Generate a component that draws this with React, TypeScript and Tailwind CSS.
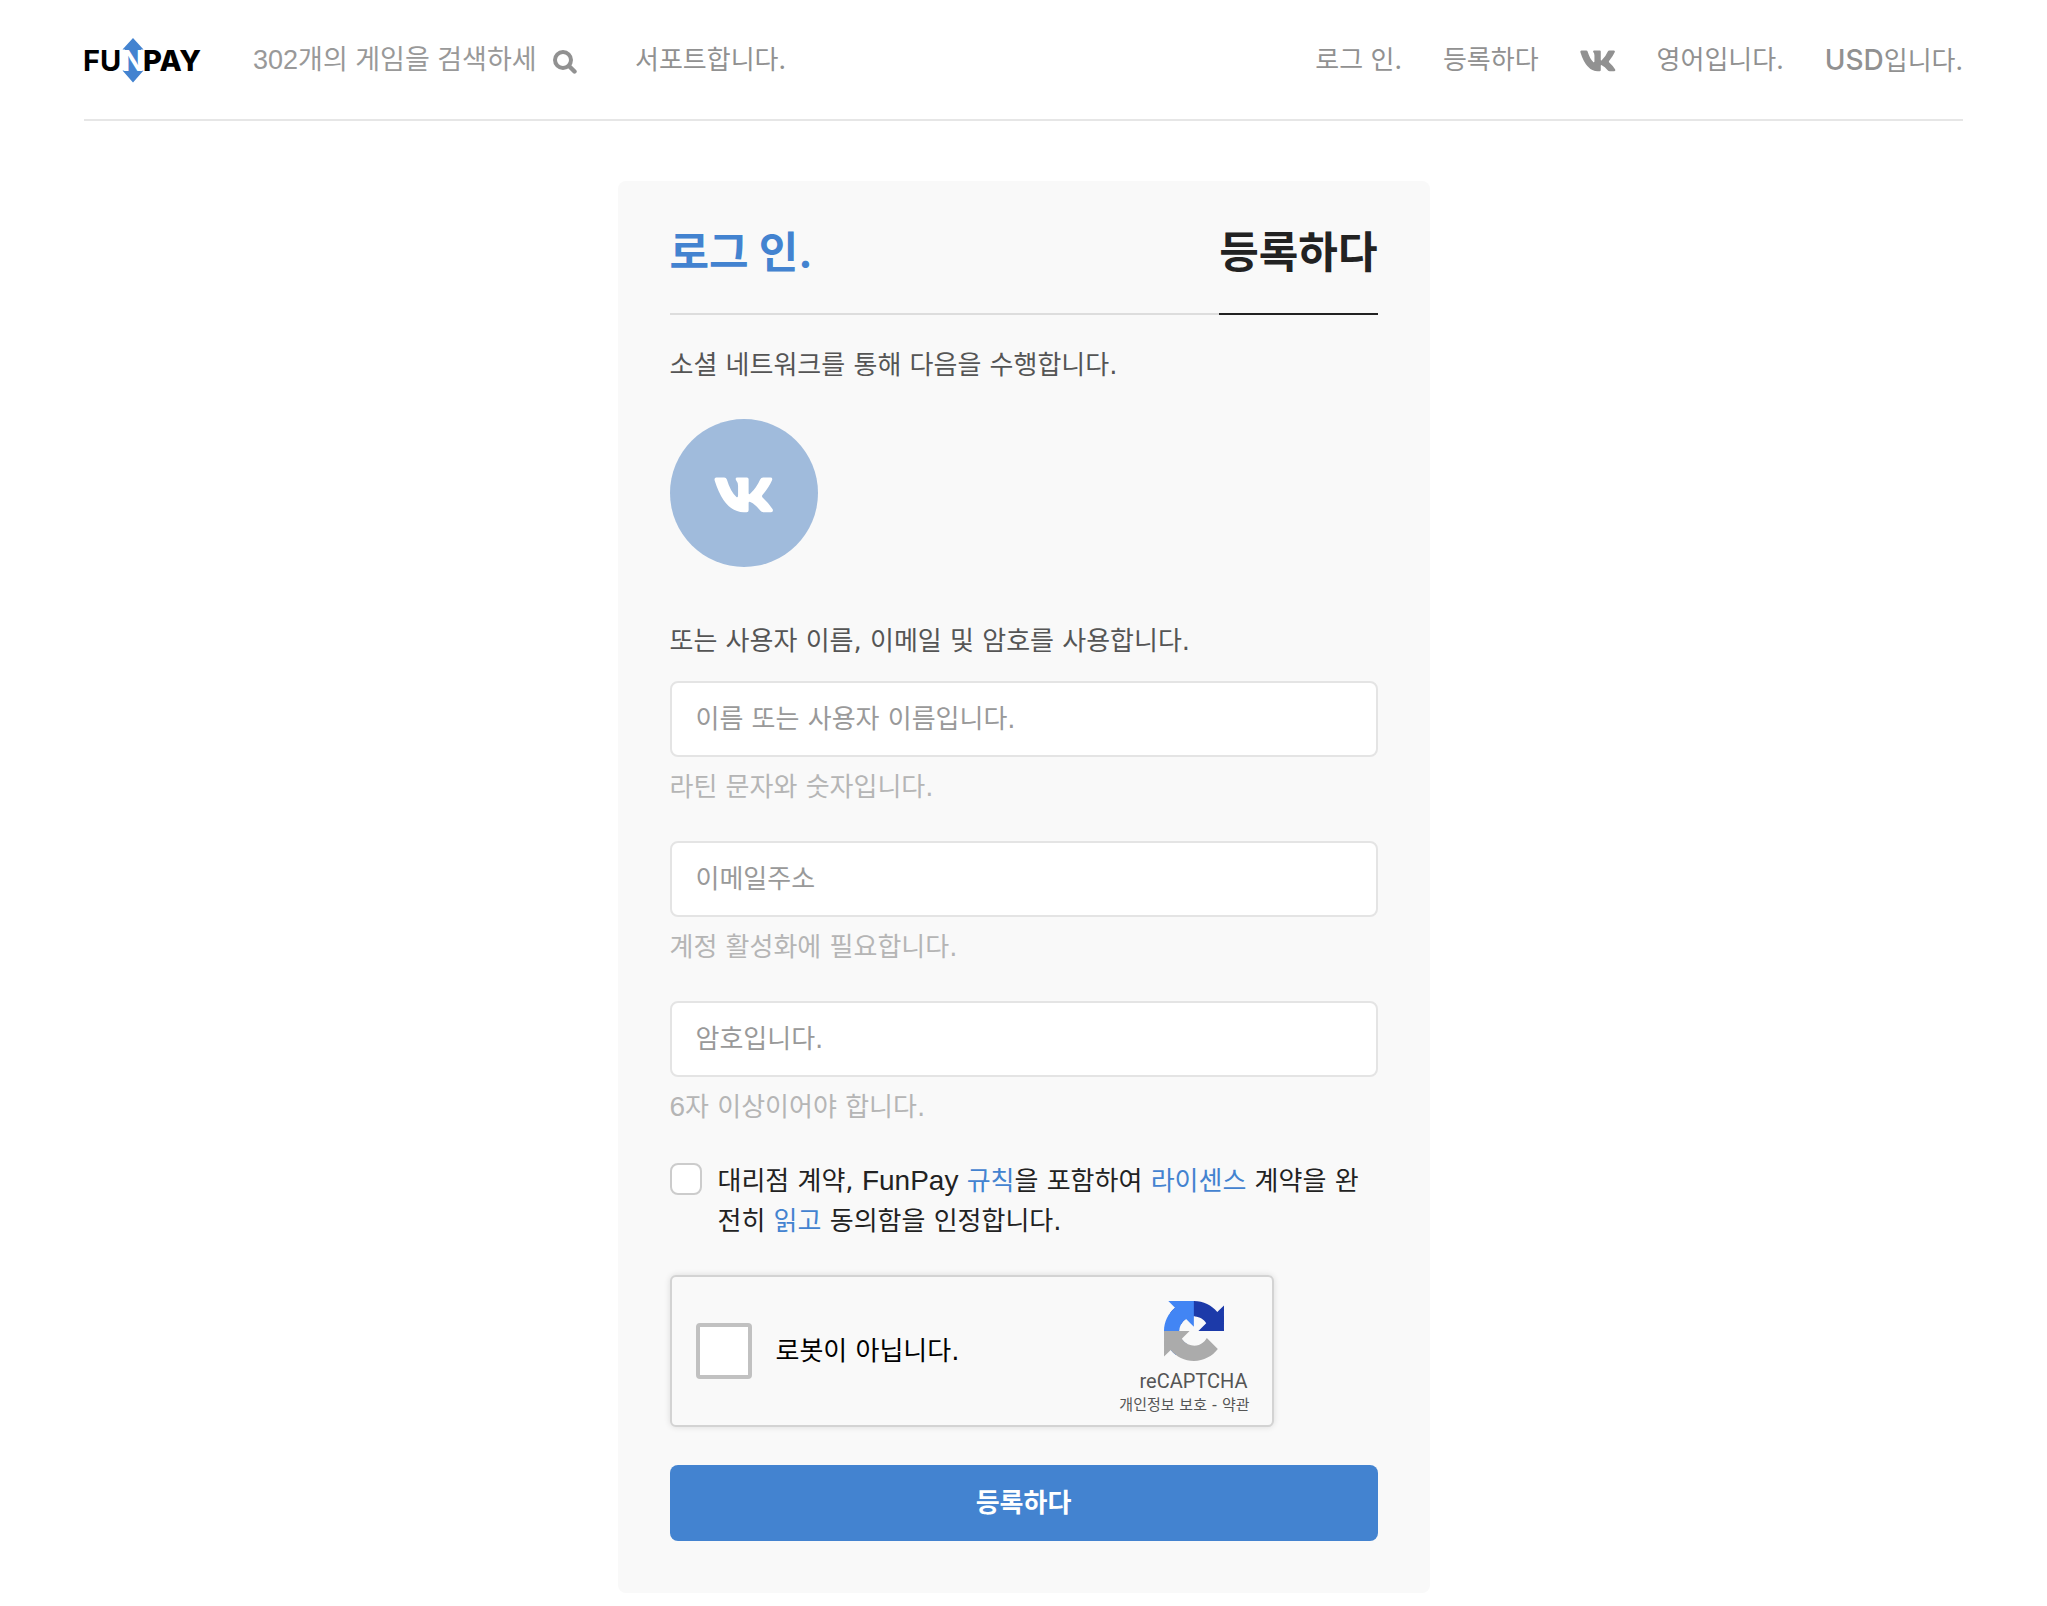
import React from "react";

const VkIcon = ({ className }: { className: string }) => (
  <svg viewBox="190 236 182 108" fill="currentColor" className={className} aria-hidden="true">
    <path d="M197 237H221Q227 237 229 243Q240 280 258 296Q263 299 263 291V262Q263 252 257 245Q253 237 261 237H290Q295 237 295 242V283Q295 291 301 285Q319 268 330 243Q333 237 339 237H361Q369 237 366 245Q357 266 337 290Q334 294 338 298Q356 314 368 333Q371 342 363 342H340Q334 342 330 337Q316 318 300 311Q295 309 295 314V336Q295 342 289 342H280Q222 342 192 246Q190 237 197 237Z" />
  </svg>
);

const SearchIcon = () => (
  <svg viewBox="0 0 24 24" fill="none" stroke="currentColor" className="size-6" aria-hidden="true">
    <circle cx="10" cy="10" r="8" strokeWidth="4" />
    <path d="M16 16L21.5 21.5" strokeWidth="4.4" strokeLinecap="round" />
  </svg>
);

const Logo = () => (
  <svg viewBox="0 0 118 46" className="h-[46px] w-[118px] overflow-visible" role="img" aria-label="FunPay">
    <path d="M49 1L59.5 12.5H57V33.5H59.5L49 45.5L38.5 33.5H41V12.5H38.5Z" fill="#4383d0" />
    <g fontFamily="Inter, sans-serif" fontSize="29">
      <text x="-1" y="34" fill="#000" fontWeight="700">FU</text>
      <text x="38" y="34" fill="#fff" fontWeight="700">N</text>
      <text x="59" y="34" fill="#000" fontWeight="800">PAY</text>
    </g>
  </svg>
);

const RecaptchaLogo = () => (
  <svg viewBox="0 0 64 64" className="mr-[26px] size-[60px]" aria-hidden="true">
    <path fill="#1c3aa9" d="M64 31.955l-.033-1.37V4.687l-7.16 7.16C50.948 4.674 42.033.093 32.05.093c-10.4 0-19.622 4.96-25.458 12.64l11.736 11.86a15.55 15.55 0 0 1 4.754-5.334c2.05-1.6 4.952-2.906 8.968-2.906.485 0 .86.057 1.135.163 4.976.393 9.288 3.14 11.828 7.124l-8.307 8.307L64 31.953" />
    <path fill="#4285f4" d="M31.862.094l-1.37.033H4.594l7.16 7.16C4.58 13.147 0 22.06 0 32.046c0 10.4 4.96 19.622 12.64 25.458L24.5 45.768a15.55 15.55 0 0 1-5.334-4.754c-1.6-2.05-2.906-4.952-2.906-8.968 0-.485.057-.86.163-1.135.393-4.976 3.14-9.288 7.124-11.828l8.307 8.307L31.86.095" />
    <path fill="#ababab" d="M.001 32.045l.033 1.37v25.898l7.16-7.16c5.86 7.173 14.774 11.754 24.76 11.754 10.4 0 19.622-4.96 25.458-12.64l-11.736-11.86a15.55 15.55 0 0 1-4.754 5.334c-2.05 1.6-4.952 2.906-8.968 2.906-.485 0-.86-.057-1.135-.163-4.976-.393-9.288-3.14-11.828-7.124l8.307-8.307c-10.522.04-22.4.066-27.295-.005" />
  </svg>
);

const Latin = ({ children }: { children: React.ReactNode }) => (
  <span className="font-['Liberation_Sans',sans-serif] text-[28px]">{children}</span>
);

const fields = [
  { id: "name", type: "text", label: "이름 또는 사용자 이름입니다.", hint: "라틴 문자와 숫자입니다." },
  { id: "email", type: "email", label: "이메일주소", hint: "계정 활성화에 필요합니다." },
  {
    id: "password",
    type: "password",
    label: "암호입니다.",
    hint: (
      <>
        <Latin>6</Latin>자 이상이어야 합니다.
      </>
    ),
  },
];

export default function App() {
  return (
    <div className="min-h-screen bg-white pb-3 font-['DejaVu_Sans','Noto_Sans_CJK_KR',sans-serif] text-[26px] leading-10 text-[#222]">
      <header className="mx-[84px] flex items-center justify-between border-b-2 border-[#e6e6e6] pt-[37px] pb-9 text-[#919191]">
        <div className="flex items-center">
          <a href="#home">
            <Logo />
          </a>
          <form className="ml-[51px] flex items-center" role="search">
            <input
              type="text"
              aria-label="게임 검색"
              placeholder="302개의 게임을 검색하세"
              className="w-[300px] bg-transparent font-['Liberation_Sans','Noto_Sans_CJK_KR',sans-serif] text-[27px] outline-none placeholder:text-[#999]"
            />
            <button type="button" aria-label="검색" className="pt-1">
              <SearchIcon />
            </button>
          </form>
          <a href="#support" className="ml-[58px] font-['Inter','Noto_Sans_CJK_KR',sans-serif]">
            서포트합니다.
          </a>
        </div>
        <nav className="flex items-center gap-[41px] font-['Inter','Noto_Sans_CJK_KR',sans-serif]">
          <a href="#login">로그 인.</a>
          <a href="#register">등록하다</a>
          <a href="#vk" aria-label="VK">
            <VkIcon className="mt-0.5 h-[22px] w-9" />
          </a>
          <a href="#language">영어입니다.</a>
          <a href="#currency">
            <span className="text-[28px] font-medium">USD</span>입니다.
          </a>
        </nav>
      </header>

      <main className="mx-auto mt-[60px] max-w-[812px] rounded-lg bg-[#f9f9f9] px-[52px] pt-[43px] pb-[52px]">
        <div className="flex justify-between border-b-2 border-[#ddd] font-['Inter','Noto_Sans_CJK_KR',sans-serif] text-[43px] leading-[56px] font-bold">
          <a href="#login" className="pb-[33px] text-[#4383d0]">
            로그 인.
          </a>
          <a href="#register" aria-current="page" className="-mb-0.5 border-b-2 border-[#222] pb-[33px]">
            등록하다
          </a>
        </div>

        <p className="mt-[30px] text-[#555]">소셜 네트워크를 통해 다음을 수행합니다.</p>
        <a
          href="#vk"
          aria-label="VK"
          className="mt-[34px] flex size-[148px] items-center justify-center rounded-full bg-[#a0bbdc] text-white"
        >
          <VkIcon className="mt-1 h-9 w-[60px]" />
        </a>

        <form>
          <p className="mt-[54px] mb-5 text-[#555]">또는 사용자 이름, 이메일 및 암호를 사용합니다.</p>
          {fields.map((f) => (
            <div key={f.id} className="mb-[34px]">
              <input
                id={f.id}
                type={f.type}
                aria-label={f.label}
                aria-describedby={f.id + "-hint"}
                placeholder={f.label}
                className="block h-[76px] w-full rounded-lg border-2 border-[#e4e4e4] bg-white px-6 outline-none placeholder:text-[#999]"
              />
              <p id={f.id + "-hint"} className="mt-2.5 text-[#b5b5b5]">
                {f.hint}
              </p>
            </div>
          ))}

          <div className="flex items-start gap-4">
            <input
              id="terms"
              type="checkbox"
              className="mt-0.5 size-8 shrink-0 appearance-none rounded-lg border-2 border-[#ccc] bg-white"
            />
            <label htmlFor="terms" className="pr-2">
              대리점 계약, <Latin>FunPay</Latin>{" "}
              <a href="#rules" className="text-[#4383d0]">규칙</a>을 포함하여{" "}
              <a href="#license" className="text-[#4383d0]">라이센스</a> 계약을 완전히{" "}
              <a href="#read" className="text-[#4383d0]">읽고</a> 동의함을 인정합니다.
            </label>
          </div>

          <div className="mt-[34px] flex h-[152px] max-w-[604px] items-center rounded-md border-2 border-[#d3d3d3] bg-[#f9f9f9] pr-[22px] pl-6 shadow-[0_0_6px_rgba(0,0,0,0.12)]">
            <input
              id="robot"
              type="checkbox"
              className="size-14 shrink-0 appearance-none rounded-sm border-4 border-[#c1c1c1] bg-white"
            />
            <label htmlFor="robot" className="ml-6 grow text-black">
              로봇이 아닙니다.
            </label>
            <div className="flex flex-col items-end pt-4 text-[#555]">
              <RecaptchaLogo />
              <span className="mt-2 mr-0.5 font-['Roboto',sans-serif] text-xl leading-6">reCAPTCHA</span>
              <span className="text-[15px] leading-6">
                <a href="#privacy">개인정보 보호</a> - <a href="#conditions">약관</a>
              </span>
            </div>
          </div>

          <button
            type="submit"
            className="mt-[38px] h-[76px] w-full rounded-lg bg-[#4383d0] font-bold text-white"
          >
            등록하다
          </button>
        </form>
      </main>
    </div>
  );
}
